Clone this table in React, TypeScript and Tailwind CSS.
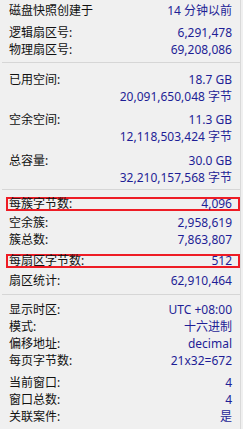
import React from "react";

type RowProps = { label?: string; value?: string; className?: string };

const Row = ({ label = "", value = "", className = "" }: RowProps) => (
  <div className={`flex h-[17px] items-center justify-between pl-[9px] pr-[8px] leading-[17px] ${className}`}>
    <span className="text-[#111111] whitespace-nowrap">{label}</span>
    <span className="text-[#1e1e96] whitespace-nowrap">{value}</span>
  </div>
);

const RedRow = ({ label, value, className = "" }: RowProps) => (
  <div
    className={`ml-[6px] flex h-[14px] w-[234px] items-center justify-between border-2 border-[#ee1c25] pl-[1px] pr-[6px] leading-[14px] ${className}`}
  >
    <span className="text-[#111111] whitespace-nowrap">{label}</span>
    <span className="text-[#1e1e96] whitespace-nowrap">{value}</span>
  </div>
);

const Sep = ({ className = "" }: { className?: string }) => (
  <div className={`ml-[2px] h-px w-[238px] bg-[#d6d6d6] ${className}`} />
);

export default function App() {
  return (
    <div
      className="h-[429px] w-[243px] overflow-hidden bg-[#f0f0f0] text-[12px]"
      style={{ fontFamily: '"Noto Sans", "Noto Sans CJK SC", sans-serif' }}
    >
      <div className="flex h-full w-[241px] flex-col border-r border-[#d9d9d9] pt-[2px]">
        <Row label="磁盘快照创建于" value="14 分钟以前" />
        <Row label="逻辑扇区号:" value="6,291,478" className="mt-[5px]" />
        <Row label="物理扇区号:" value="69,208,086" />
        <Sep className="mt-[4px]" />
        <Row label="已用空间:" value="18.7 GB" className="mt-[8px]" />
        <Row value="20,091,650,048 字节" />
        <Row label="空余空间:" value="11.3 GB" className="mt-[6px]" />
        <Row value="12,118,503,424 字节" />
        <Row label="总容量:" value="30.0 GB" className="mt-[7px]" />
        <Row value="32,210,157,568 字节" />
        <Sep className="mt-[3px]" />
        <RedRow label="每簇字节数:" value="4,096" className="mt-[7px]" />
        <Row label="空余簇:" value="2,958,619" className="mt-[3px]" />
        <Row label="簇总数:" value="7,863,807" />
        <RedRow label="每扇区字节数:" value="512" className="mt-[6px]" />
        <Row label="扇区统计:" value="62,910,464" className="mt-[4px]" />
        <Sep className="mt-[5px]" />
        <Row label="显示时区:" value="UTC +08:00" className="mt-[6px]" />
        <Row label="模式:" value="十六进制" />
        <Row label="偏移地址:" value="decimal" />
        <Row label="每页字节数:" value="21x32=672" />
        <Row label="当前窗口:" value="4" className="mt-[5px]" />
        <Row label="窗口总数:" value="4" />
        <Row label="关联案件:" value="是" />
      </div>
    </div>
  );
}
